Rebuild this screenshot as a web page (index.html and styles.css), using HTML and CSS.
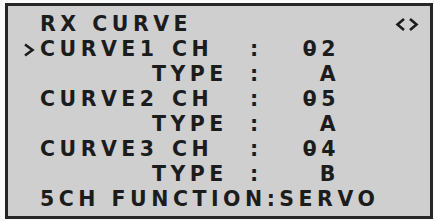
FILE: index.html
```html
<!DOCTYPE html>
<html lang="en">
<head>
    <meta charset="UTF-8">
    <title>RX CURVE</title>
    <link rel="stylesheet" href="styles.css">
</head>
<body>
    <div class="screen">
        <div class="row">
            <span class="marker"></span>
            <div class="title">
                <span>RX CURVE</span>
                <svg class="arrows" width="24" height="13" viewBox="0 0 24 13">
                    <polyline points="9,1 2.5,6.5 9,12" />
                    <polyline points="15,1 21.5,6.5 15,12" />
                </svg>
            </div>
        </div>
        <div class="row">
            <span class="marker">
                <svg width="12" height="14" viewBox="0 0 12 14"><polyline points="2,1.5 9.5,7 2,12.5" /></svg>
            </span>
            <span>CURVE1</span>
            <span>CH</span>
            <span class="colon">:</span>
            <span class="value"><span class="zero">0</span>2</span>
        </div>
        <div class="row">
            <span class="marker"></span>
            <span class="sub">TYPE</span>
            <span class="colon">:</span>
            <span class="value">A</span>
        </div>
        <div class="row">
            <span class="marker"></span>
            <span>CURVE2</span>
            <span>CH</span>
            <span class="colon">:</span>
            <span class="value"><span class="zero">0</span>5</span>
        </div>
        <div class="row">
            <span class="marker"></span>
            <span class="sub">TYPE</span>
            <span class="colon">:</span>
            <span class="value">A</span>
        </div>
        <div class="row">
            <span class="marker"></span>
            <span>CURVE3</span>
            <span>CH</span>
            <span class="colon">:</span>
            <span class="value"><span class="zero">0</span>4</span>
        </div>
        <div class="row">
            <span class="marker"></span>
            <span class="sub">TYPE</span>
            <span class="colon">:</span>
            <span class="value">B</span>
        </div>
        <div class="row">
            <span class="marker"></span>
            <span class="wide">5CH FUNCTION:SERVO</span>
        </div>
    </div>
</body>
</html>
```

FILE: styles.css
```css
body {
    margin: 0;
    background: #fbfbfb;
}
.screen {
    box-sizing: border-box;
    width: 428px;
    height: 216px;
    margin: 3px 0 0 5px;
    padding: 6px 0 0 15px;
    background: #cfcfcf;
    border: 3px solid #262626;
    color: #1c1c1c;
    font-family: "DejaVu Sans", sans-serif;
    font-weight: bold;
    font-size: 20.5px;
    letter-spacing: 4.5px;
    line-height: 25px;
}
.row {
    display: grid;
    grid-template-columns: 17px 132px 78px 8px 82px;
    height: 25px;
    white-space: nowrap;
}
.marker {
    display: flex;
    align-items: center;
}
.marker svg polyline, .arrows polyline {
    fill: none;
    stroke: #1c1c1c;
    stroke-width: 2.6;
}
.title {
    grid-column: 2 / -1;
    width: 380px;
    display: flex;
    justify-content: space-between;
    align-items: center;
}
.arrows {
    margin-right: 1px;
}
.sub {
    grid-column: 2 / 4;
    padding-left: 112px;
}
.colon {
    letter-spacing: 0;
    text-align: center;
}
.value {
    text-align: right;
}
.zero {
    position: relative;
}
.zero::after {
    content: "";
    position: absolute;
    left: 3px;
    right: 7.5px;
    top: 12px;
    height: 2px;
    background: #1c1c1c;
}
.wide {
    grid-column: 2 / -1;
}
```
